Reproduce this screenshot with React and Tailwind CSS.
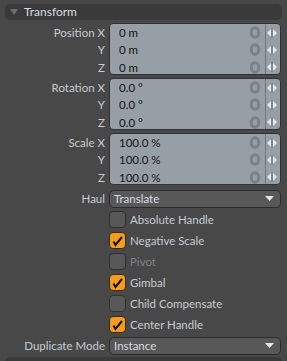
import React from "react";

const font = { fontFamily: 'Lato, "Noto Sans", sans-serif' };

function Arrows() {
  return (
    <svg width="10" height="10" viewBox="0 0 10 10">
      <path d="M4 1 L0 5 L4 9 Z" fill="#e6e9ec" />
      <path d="M6 1 L10 5 L6 9 Z" fill="#e6e9ec" />
      <rect x="4.6" y="0" width="0.8" height="10" fill="#5d6268" />
    </svg>
  );
}

function Zero() {
  return (
    <svg width="12" height="13" viewBox="0 0 12 13">
      <ellipse cx="6" cy="6.5" rx="3.8" ry="4.8" fill="none" stroke="#7a8086" strokeWidth="3" />
    </svg>
  );
}

function FieldGroup({ label, values }) {
  const axes = ["X", "Y", "Z"];
  return (
    <div className="flex">
      <div className="w-[105px] h-[52px] flex flex-col py-[1px]">
        {axes.map((a, i) => (
          <div key={a} className="flex-1 flex items-center justify-end text-[11.5px] text-[#c5ccd3]">
            {i === 0 ? `${label} ${a}` : a}
          </div>
        ))}
      </div>
      <div className="ml-[4px] w-[172px] h-[52px] rounded-[4px] border border-[#2e3236] bg-[#979fa6] relative flex flex-col">
        <div className="absolute top-0 bottom-0 left-[155px] w-px bg-[#6f767d]" />
        {values.map((v, i) => (
          <div key={i} className="flex-1 flex items-center">
            <span className="pl-[9px] flex-1 text-[11.5px] text-[#111]">{v}</span>
            <span className="w-[14px] flex justify-center mr-[2px]">
              <Zero />
            </span>
            <span className="w-[16px] flex justify-center">
              <Arrows />
            </span>
          </div>
        ))}
      </div>
    </div>
  );
}

function Dropdown({ label, value, className = "" }) {
  return (
    <div className={"flex items-center " + className}>
      <div className="w-[105px] text-right text-[11.5px] text-[#c5ccd3]">{label}</div>
      <div className="ml-[4px] w-[172px] h-[18px] rounded-[5px] border border-[#2b2b2b] bg-[#585858] flex items-center justify-between pl-[4px] pr-[6px]">
        <span className="text-[11.5px] text-[#d7dce1]">{value}</span>
        <svg width="9" height="6" viewBox="0 0 9 6">
          <path d="M0 0 L9 0 L4.5 5 Z" fill="#e4e6e8" />
        </svg>
      </div>
    </div>
  );
}

function Check({ label, checked, disabled }) {
  return (
    <div className="flex h-[21px] items-center">
      <div className="w-[109px]" />
      <div
        className={
          "w-[17px] h-[17px] rounded-[4px] border flex items-center justify-center " +
          (checked ? "bg-[#f39c1f] border-[#3a2a10]" : "bg-[#585858] border-[#2f2f2f]")
        }
      >
        {checked && (
          <svg width="13" height="13" viewBox="0 0 13 13">
            <path d="M2.5 7.5 L4.5 11 L11 3" fill="none" stroke="#111" strokeWidth="2" strokeLinejoin="miter" />
          </svg>
        )}
      </div>
      <span className={"ml-[4px] text-[11.5px] " + (disabled ? "text-[#7d8185]" : "text-[#c5ccd3]")}>{label}</span>
    </div>
  );
}

export default function App() {
  return (
    <div className="w-[287px] h-[361px] bg-[#484848] overflow-hidden" style={font}>
      <div className="pt-[4px] px-[5px]">
        <div className="h-[16px] rounded-[5px] bg-[#3a3a3a] flex items-center pl-[5px]">
          <svg width="8" height="7" viewBox="0 0 8 7">
            <path d="M0 0 L8 0 L4 6 Z" fill="#6e6e6e" />
          </svg>
          <span className="ml-[6px] text-[12px] text-[#d6dce2]">Transform</span>
        </div>
      </div>
      <div className="flex flex-col pt-[3px] gap-[3px]">
        <FieldGroup label="Position" values={["0 m", "0 m", "0 m"]} />
        <FieldGroup label="Rotation" values={["0.0 °", "0.0 °", "0.0 °"]} />
        <FieldGroup label="Scale" values={["100.0 %", "100.0 %", "100.0 %"]} />
      </div>
      <div className="flex flex-col pt-[4px]">
        <Dropdown label="Haul" value="Translate" className="h-[20px]" />
        <Check label="Absolute Handle" />
        <Check label="Negative Scale" checked />
        <Check label="Pivot" disabled />
        <Check label="Gimbal" checked />
        <Check label="Child Compensate" />
        <Check label="Center Handle" checked />
        <Dropdown label="Duplicate Mode" value="Instance" className="h-[21px]" />
      </div>
      <div className="mx-[5px] mt-[1px] h-[10px] rounded-t-[5px] bg-[#3a3a3a]" />
    </div>
  );
}
